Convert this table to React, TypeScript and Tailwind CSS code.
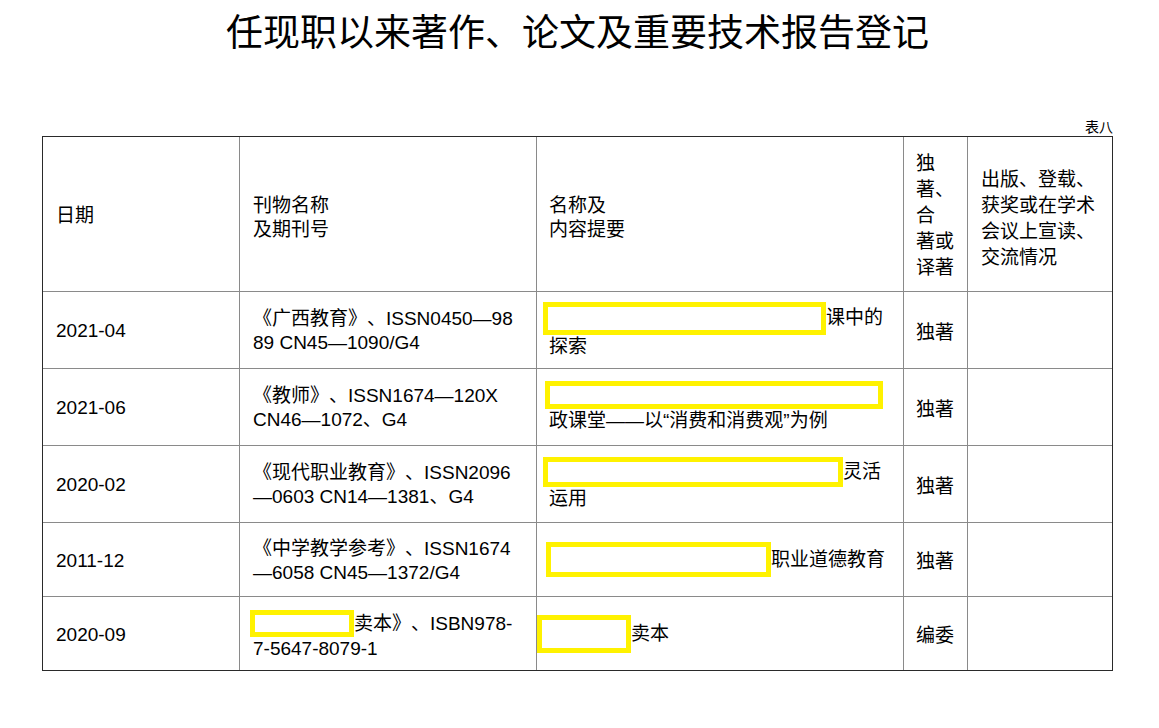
import React from "react";

const FONT = {
  fontFamily: '"Liberation Sans", "Noto Sans CJK SC", sans-serif',
};

// redaction marks: hollow yellow rectangles that sit in the text flow
function Mark({ w, h, ml }: { w: number; h: number; ml: number }) {
  return (
    <span
      className="inline-block shrink-0 border-[5px] border-[#fff200] bg-white"
      style={{ width: w, height: h, marginLeft: ml }}
    />
  );
}

function Line({ children, h = 24 }: { children: React.ReactNode; h?: number }) {
  return (
    <div className="flex items-center whitespace-nowrap" style={{ minHeight: h, lineHeight: `${h}px` }}>
      {children}
    </div>
  );
}

const cell = "flex flex-col justify-center border-r border-b border-[#8a8a8a]";
const last = "flex flex-col justify-center border-b border-[#8a8a8a]";

type Row = {
  date: string;
  journal: React.ReactNode;
  title: React.ReactNode;
  kind: string;
  h: string;
};

const rows: Row[] = [
  {
    date: "2021-04",
    journal: (
      <>
        <Line>《广西教育》、ISSN0450—98</Line>
        <Line>89 CN45—1090/G4</Line>
      </>
    ),
    title: (
      <>
        <Line>
          <Mark w={283} h={33} ml={-6} />
          课中的
        </Line>
        <Line>探索</Line>
      </>
    ),
    kind: "独著",
    h: "h-[77px]",
  },
  {
    date: "2021-06",
    journal: (
      <>
        <Line>《教师》、ISSN1674—120X</Line>
        <Line>CN46—1072、G4</Line>
      </>
    ),
    title: (
      <>
        <Line>
          <Mark w={338} h={28} ml={-4} />
        </Line>
        <Line>政课堂——以“消费和消费观”为例</Line>
      </>
    ),
    kind: "独著",
    h: "h-[77px]",
  },
  {
    date: "2020-02",
    journal: (
      <>
        <Line>《现代职业教育》、ISSN2096</Line>
        <Line>—0603 CN14—1381、G4</Line>
      </>
    ),
    title: (
      <>
        <Line>
          <Mark w={300} h={30} ml={-6} />
          灵活
        </Line>
        <Line>运用</Line>
      </>
    ),
    kind: "独著",
    h: "h-[77px]",
  },
  {
    date: "2011-12",
    journal: (
      <>
        <Line>《中学教学参考》、ISSN1674</Line>
        <Line>—6058 CN45—1372/G4</Line>
      </>
    ),
    title: (
      <Line>
        <Mark w={225} h={35} ml={-3} />
        职业道德教育
      </Line>
    ),
    kind: "独著",
    h: "h-[74px]",
  },
  {
    date: "2020-09",
    journal: (
      <>
        <Line h={23}>
          <Mark w={104} h={27} ml={-3} />
          卖本》、ISBN978-
        </Line>
        <Line h={23}>7-5647-8079-1</Line>
      </>
    ),
    title: (
      <Line>
        <Mark w={94} h={38} ml={-12} />
        卖本
      </Line>
    ),
    kind: "编委",
    h: "h-[73px]",
  },
];

export default function App() {
  return (
    <div className="min-h-[728px] w-full bg-white text-black [text-spacing-trim:space-all]" style={FONT}>
      <div className="ml-[42px] w-[1071px]">
        <h1 className="pt-[13px] text-center text-[37px] leading-[41px] font-normal">
          任现职以来著作、论文及重要技术报告登记
        </h1>
        <div className="mt-[64px] text-right text-[14px] leading-[18px]">表八</div>

        <div className="grid grid-cols-[197px_297px_367px_64px_144px] border border-[#2a2a2a] text-[19px]">
          {/* header */}
          <div className={`${cell} h-[155px] pt-[4px] pl-[13px]`}>
            <Line>日期</Line>
          </div>
          <div className={`${cell} h-[155px] pt-[8px] pl-[13px]`}>
            <Line>刊物名称</Line>
            <Line>及期刊号</Line>
          </div>
          <div className={`${cell} h-[155px] pt-[8px] pl-[12px]`}>
            <Line>名称及</Line>
            <Line>内容提要</Line>
          </div>
          <div className={`${cell} h-[155px] pt-[4px] pl-[12px]`}>
            <Line h={26}>独</Line>
            <Line h={26}>著、</Line>
            <Line h={26}>合</Line>
            <Line h={26}>著或</Line>
            <Line h={26}>译著</Line>
          </div>
          <div className={`${last} h-[155px] justify-start pt-[30px] pl-[13px]`}>
            <Line h={26}>出版、登载、</Line>
            <Line h={26}>获奖或在学术</Line>
            <Line h={26}>会议上宣读、</Line>
            <Line h={26}>交流情况</Line>
          </div>

          {rows.map((r, i) => {
            const end = i === rows.length - 1;
            const c = end ? cell.replace(" border-b", "") : cell;
            const l = end ? last.replace(" border-b", "") : last;
            return (
              <React.Fragment key={r.date}>
                <div className={`${c} ${r.h} pt-[2px] pl-[13px]`}>
                  <Line>{r.date}</Line>
                </div>
                <div className={`${c} ${r.h} pt-[2px] pl-[13px]`}>{r.journal}</div>
                <div className={`${c} ${r.h} pl-[12px]`}>{r.title}</div>
                <div className={`${c} ${r.h} pt-[5px] pl-[12px]`}>
                  <Line>{r.kind}</Line>
                </div>
                <div className={`${l} ${r.h}`} />
              </React.Fragment>
            );
          })}
        </div>
      </div>
    </div>
  );
}
